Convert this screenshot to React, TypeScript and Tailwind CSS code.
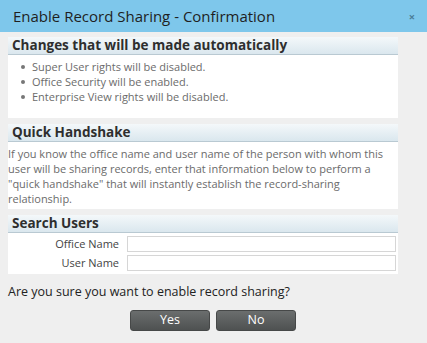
import React from 'react';

const font = { fontFamily: '"Open Sans", "Liberation Sans", sans-serif' };

const SectionHeader: React.FC<{ title: string }> = ({ title }) => (
  <div className="h-[18px] flex items-center px-[4px] bg-gradient-to-b from-[#f4f8fa] to-[#dae7ee] border-b border-[#b9c9d2]">
    <span className="text-[13.5px] font-bold text-[#2e2e2e] leading-none">{title}</span>
  </div>
);

export default function App() {
  return (
    <div className="w-[427px] h-[343px] bg-[#efefef] overflow-hidden" style={font}>
      {/* Title bar */}
      <div className="h-[32px] bg-[#7ec7eb] flex items-center justify-between pl-[13px] pr-[12px]">
        <span className="text-[15px] text-[#1f1f1f] leading-none">Enable Record Sharing - Confirmation</span>
        <span className="text-[11px] text-[#4b7d97] font-bold leading-none">×</span>
      </div>

      <div className="px-[8px] w-[406px]">
        {/* Changes */}
        <div className="mt-[5px] bg-white">
          <SectionHeader title="Changes that will be made automatically" />
          <ul className="pt-[4px] pb-[14px] pl-[13px] text-[11px] leading-[15px] text-[#6b6b6b]">
            {['Super User rights will be disabled.', 'Office Security will be enabled.', 'Enterprise View rights will be disabled.'].map((t) => (
              <li key={t} className="flex items-center">
                <span className="w-[4px] h-[4px] rounded-full bg-[#777] mr-[7px]" />
                {t}
              </li>
            ))}
          </ul>
        </div>

        {/* Quick Handshake */}
        <div className="mt-[6px] bg-white">
          <SectionHeader title="Quick Handshake" />
          <p className="pt-[4px] pb-[3px] pr-[4px] text-[11px] leading-[15px] text-[#6b6b6b]">
            If you know the office name and user name of the person with whom this user will be sharing records, enter that information below to perform a "quick handshake" that will instantly establish the record-sharing relationship.
          </p>
        </div>

        {/* Search Users */}
        <div className="mt-[6px] bg-white pb-[3px]">
          <SectionHeader title="Search Users" />
          <div className="pt-[3px] flex flex-col gap-[2px] text-[11px] text-[#444]">
            <label className="flex items-center">
              <span className="w-[119px] text-right pr-[8px]">Office Name</span>
              <input className="flex-1 mr-[2px] h-[16px] border border-[#d6d6d6] bg-white outline-none" />
            </label>
            <label className="flex items-center">
              <span className="w-[119px] text-right pr-[8px]">User Name</span>
              <input className="flex-1 mr-[2px] h-[16px] border border-[#d6d6d6] bg-white outline-none" />
            </label>
          </div>
        </div>

        <p className="mt-[12px] text-[12.5px] text-[#222] leading-none">Are you sure you want to enable record sharing?</p>

        <div className="mt-[11px] flex gap-[6px] pl-[122px]">
          {['Yes', 'No'].map((b) => (
            <button
              key={b}
              className="w-[80px] h-[21px] rounded-[3px] bg-gradient-to-b from-[#6b6e6e] to-[#4e5151] border border-[#464848] text-white text-[12.5px] leading-none"
            >
              {b}
            </button>
          ))}
        </div>
      </div>
    </div>
  );
}
